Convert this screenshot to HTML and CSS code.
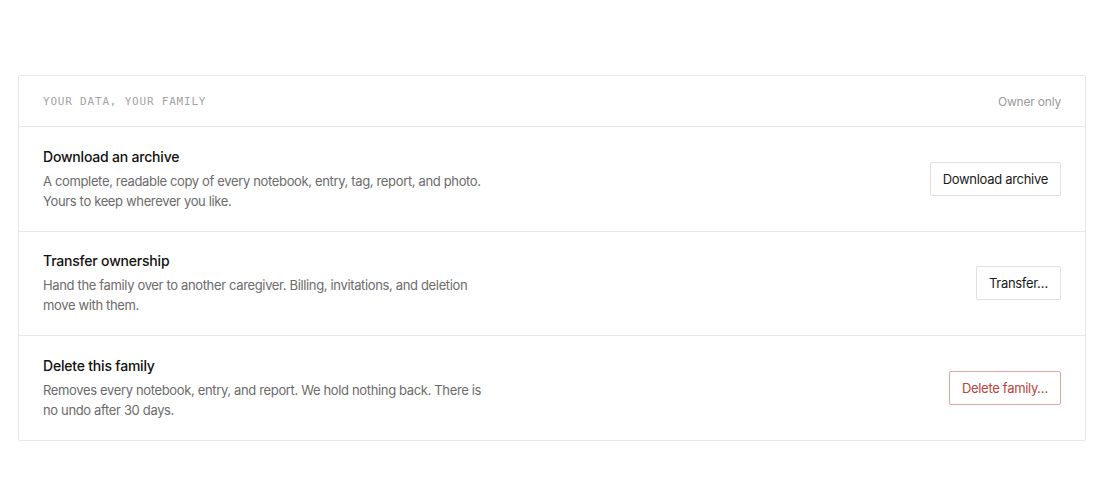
FILE: index.html
```html
<!DOCTYPE html>
<html lang="en">
  <head>
    <meta charset="UTF-8" />
    <meta name="viewport" content="width=device-width, initial-scale=1.0" />
    <title>Family settings</title>
    <link rel="stylesheet" href="styles.css">
  </head>
  <body>
    <main class="page">
      <section class="panel">
        <header class="panel-head">
          <span class="eyebrow">Your data, your family</span>
          <span class="scope">Owner only</span>
        </header>

        <div class="row">
          <div class="row-text">
            <h3>Download an archive</h3>
            <p>A complete, readable copy of every notebook, entry, tag, report, and photo. Yours to keep wherever you like.</p>
          </div>
          <button class="btn">Download archive</button>
        </div>

        <div class="row">
          <div class="row-text">
            <h3>Transfer ownership</h3>
            <p>Hand the family over to another caregiver. Billing, invitations, and deletion move with them.</p>
          </div>
          <button class="btn">Transfer…</button>
        </div>

        <div class="row">
          <div class="row-text">
            <h3>Delete this family</h3>
            <p>Removes every notebook, entry, and report. We hold nothing back. There is no undo after 30 days.</p>
          </div>
          <button class="btn btn-danger">Delete family…</button>
        </div>
      </section>
    </main>
  </body>
</html>
```

FILE: styles.css
```css
/* styles.css */

body {
  margin: 0;
  background-color: #fff;
  font-family: Inter, "Noto Sans", sans-serif;
  color: #111;
}

.page {
  padding: 75px 19px 75px 18px;
}

.panel {
  border: 1px solid #e6e6e6;
  border-radius: 2px;
}

.panel-head {
  display: flex;
  justify-content: space-between;
  align-items: center;
  height: 50px;
  padding: 0 24px;
  border-bottom: 1px solid #e6e6e6;
}

.eyebrow {
  font-family: "DejaVu Sans Mono", "Liberation Mono", monospace;
  font-size: 11px;
  letter-spacing: 0.8px;
  text-transform: uppercase;
  color: #a3a3a3;
}

.scope {
  font-size: 12px;
  letter-spacing: -0.2px;
  color: #9a9a9a;
}

.row {
  display: flex;
  justify-content: space-between;
  align-items: center;
  padding: 19.5px 24px 20px;
  border-bottom: 1px solid #e6e6e6;
}

.row:last-child {
  border-bottom: none;
}

.row-text h3 {
  margin: 0 0 4px;
  font-size: 14px;
  font-weight: 500;
  line-height: 20px;
  letter-spacing: -0.2px;
  color: #111;
}

.row-text p {
  margin: 0;
  max-width: 450px;
  font-size: 13px;
  line-height: 20px;
  letter-spacing: -0.35px;
  color: #6b6b6b;
}

.btn {
  height: 34px;
  padding: 0 12px;
  font-family: inherit;
  font-size: 13px;
  letter-spacing: -0.3px;
  color: #1a1a1a;
  background-color: #fff;
  border: 1px solid #e0e0e0;
  border-radius: 2px;
  cursor: pointer;
}

.btn-danger {
  color: #b8443a;
  border-color: #dba8a6;
}
```
